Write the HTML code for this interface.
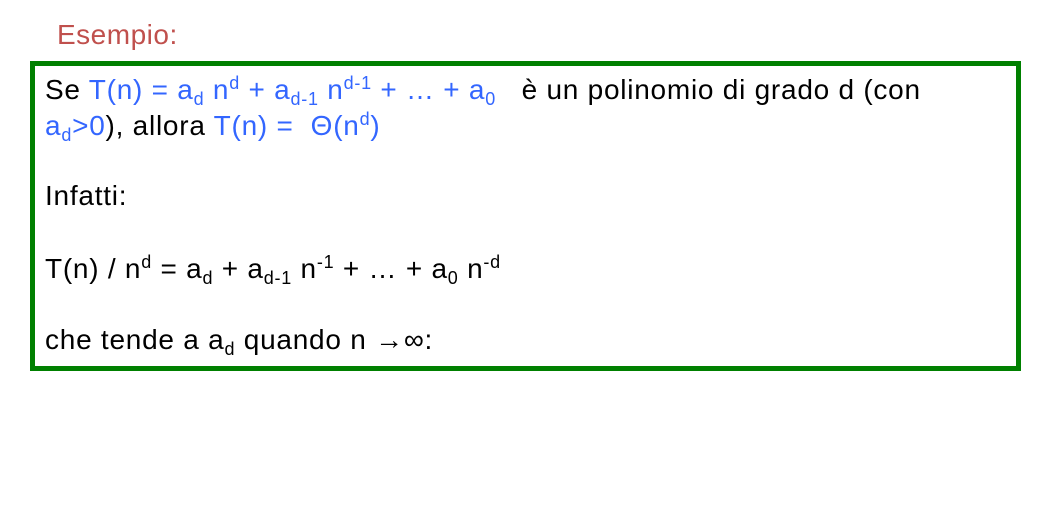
<!DOCTYPE html>
<html><head><meta charset="utf-8"><style>
body{margin:0;width:1045px;height:505px;background:#fff;position:relative;overflow:hidden;font-family:"Liberation Sans",sans-serif;}
.t{position:absolute;left:57px;top:19px;font-size:28px;color:#c0504d;letter-spacing:0.5px;}
.box{position:absolute;left:30px;top:61px;width:981px;height:300px;border:5px solid #008000;}
.l{position:absolute;left:45px;font-size:28px;color:#000;white-space:nowrap;line-height:30px;letter-spacing:0.75px;}
.b{color:#3366ff;}
sub{font-size:18px;vertical-align:-6px;}
sup{font-size:18px;vertical-align:10px;}
</style></head><body>
<div class="t">Esempio:</div>
<div class="box"></div>
<div class="l" style="top:68px">Se <span class="b">T(n) = a<sub>d</sub> n<sup>d</sup> + a<sub>d-1</sub> n<sup>d-1</sup> + … + a<sub>0</sub></span> &nbsp; è un polinomio di grado d (con</div>
<div class="l" style="top:104px"><span class="b">a<sub>d</sub>&gt;0</span>), allora <span class="b">T(n) = &nbsp;Θ(n<sup>d</sup>)</span></div>
<div class="l" style="top:181px">Infatti:</div>
<div class="l" style="top:247px">T(n) / n<sup>d</sup> = a<sub>d</sub> + a<sub>d-1</sub> n<sup>-1</sup> + … + a<sub>0</sub> n<sup>-d</sup></div>
<div class="l" style="top:325px">che tende a a<sub>d</sub> quando n →∞:</div>
</body></html>
